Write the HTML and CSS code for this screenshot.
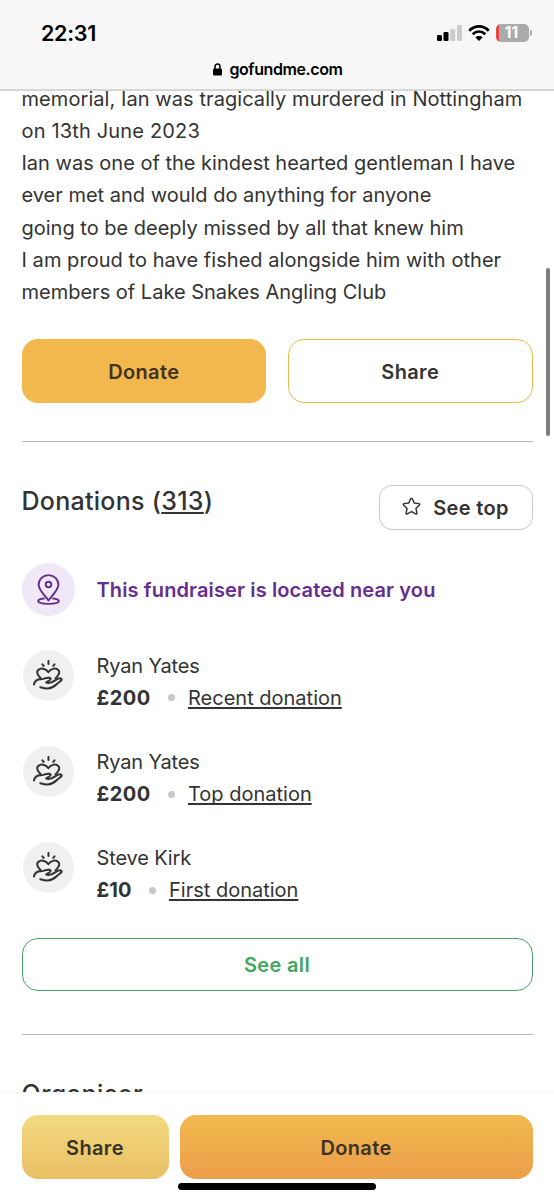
FILE: index.html
```
<!DOCTYPE html>
<html lang="en">
<head>
<meta charset="utf-8">
<title>gofundme.com</title>
<link rel="stylesheet" href="styles.css">
</head>
<body>
<svg class="defs" aria-hidden="true">
  <symbol id="hand-heart" viewBox="0 0 32 32">
    <path d="M16.500 1v3.200M10 4.500l1.300 1.800M23 4.500l-1.300 1.800"/>
    <path d="M8.300 19.500C3.600 15 3.600 11.500 6.500 10c3.200-1.900 7.400-.3 9.900 3 2.700-3.500 7-4.900 9.900-2.900 2.900 2.100 1.900 5.700-2.300 9.500"/>
    <path d="M1 26.200c.8-4 3.500-5.700 7-5.700 3.700 0 4-1.300 8.600-1.500 2.200-.1 2.700 1 1.500 2.200-1.100 1-2.400 1.500-4 2.800 3.400 1.300 6.700-.3 9.600-2.300 2.400-1.700 5.200-2.500 6.500-1.700 1 .8-.1 2-1.800 3.200-5.500 4.200-6.700 7-12.400 7.300-2.900.1-5.500-.6-8.200-1.500"/>
  </symbol>
</svg>
<header class="browser">
  <div class="status">
    <span class="clock">22:31</span>
    <span class="indicators">
      <svg class="signal" viewBox="0 0 25 16"><rect y="10" width="5" height="6" rx="1.200"/><rect x="6.500" y="7" width="5" height="9" rx="1.200"/><g fill="#ccc"><rect x="13.200" y="4" width="5" height="12" rx="1.200"/><rect x="20" y="0" width="5" height="16" rx="1.200"/></g></svg>
      <svg class="wifi" viewBox="0 0 22 16"><g fill="none" stroke="#000" stroke-width="2.800"><path d="M1.200 5.700C7-.1 15-.1 20.800 5.700"/><path d="M4.700 9.200c3.800-3.500 8.800-3.500 12.600 0"/></g><path d="M11 16l-3.700-3.700c2-1.900 5.400-1.900 7.400 0z"/></svg>
      <span class="battery"><span class="level">11</span><span class="cap"></span></span>
    </span>
  </div>
  <div class="address">
    <svg class="lock" viewBox="0 0 9 13"><path d="M2 6V3.600a2.500 2.500 0 0 1 5 0V6" fill="none" stroke="#000" stroke-width="1.500"/><rect y="5.500" width="9" height="7" rx="1.200"/></svg>
    <span>gofundme.com</span>
  </div>
</header>
<main class="page">
  <div class="story">
    <p class="l1">memorial, Ian was tragically murdered in Nottingham</p>
    <p class="l2">on 13th June 2023</p>
    <p>Ian was one of the kindest hearted gentleman I have</p>
    <p>ever met and would do anything for anyone</p>
    <p>going to be deeply missed by all that knew him</p>
    <p class="l6">I am proud to have fished alongside him with other</p>
    <p>members of Lake Snakes Angling Club</p>
  </div>
  <div class="actions">
    <button class="btn solid">Donate</button>
    <button class="btn outline">Share</button>
  </div>
  <section class="donations">
    <div class="heading">
      <h2>Donations (<a>313</a>)</h2>
      <button class="btn top"><svg viewBox="0 0 20 20"><path d="M9.200 1.800q.8-1.300 1.600 0l2.100 4.600 4.900.6q1.500.3.500 1.500l-3.600 3.500 1 4.900q.1 1.500-1.300.9L10 15.400l-4.400 2.400q-1.400.6-1.300-.9l1-4.900L1.700 8.500Q.7 7.300 2.200 7l4.900-.6z"/></svg><span>See top</span></button>
    </div>
    <div class="near">
      <span class="disc purple"><svg viewBox="0 0 24 32"><path d="M12 27.500C8 21.500 1.700 16.500 1.700 11a10.300 10 0 0 1 20.600 0c0 5.500-6.300 10.500-10.300 16.500z"/><circle cx="12" cy="10.800" r="2.900"/><path d="M7.200 25.400c-3.700.5-6 1.500-6 2.700 0 1.800 4.800 2.900 10.800 2.900s10.800-1.100 10.800-2.900c0-1.200-2.300-2.200-6-2.700"/></svg></span>
      <span class="near-text">This fundraiser is located near you</span>
    </div>
    <ul class="list">
      <li><span class="disc"><svg><use href="#hand-heart"/></svg></span><div><div class="name">Ryan Yates</div><div class="detail"><b>£200</b><i></i><a>Recent donation</a></div></div></li>
      <li><span class="disc"><svg><use href="#hand-heart"/></svg></span><div><div class="name">Ryan Yates</div><div class="detail"><b>£200</b><i></i><a>Top donation</a></div></div></li>
      <li><span class="disc"><svg><use href="#hand-heart"/></svg></span><div><div class="name">Steve Kirk</div><div class="detail"><b class="ten">£10</b><i></i><a>First donation</a></div></div></li>
    </ul>
    <button class="btn all">See all</button>
  </section>
  <h2 class="organiser">Organiser</h2>
  <span class="scrollbar"></span>
</main>
<footer class="dock">
  <div class="dock-row">
    <button class="btn share">Share</button>
    <button class="btn donate">Donate</button>
  </div>
  <div class="home"></div>
</footer>
</body>
</html>
```

FILE: styles.css
```
* { box-sizing: border-box; }
body {
  margin: 0;
  height: 1200px;
  overflow: hidden;
  display: flex;
  flex-direction: column;
  background: #fff;
  color: #333;
  font: 20px/32px Inter, "Liberation Sans", sans-serif;
}
p, h2, ul { margin: 0; padding: 0; }
.defs { position: absolute; width: 0; height: 0; }
.browser {
  flex: 0 0 91px;
  background: #f7f7f7;
  border-bottom: 2px solid #d6d6d6;
  color: #000;
}
.status {
  height: 55px;
  padding: 21px 22px 0 41px;
  display: flex;
  justify-content: space-between;
  align-items: flex-start;
}
.clock { font-size: 21.500px; line-height: 24px; font-weight: 600; letter-spacing: -.3px; }
.indicators { display: flex; align-items: center; height: 24px; }
.signal { width: 25px; height: 16px; margin-right: 6px; }
.wifi { width: 22px; height: 16px; margin-right: 6px; }
.battery { display: flex; align-items: center; gap: 1px; }
.level {
  width: 33px;
  height: 18px;
  border-radius: 5px;
  background: linear-gradient(90deg, #e8463c 3.500px, #ababab 3.500px);
  color: #fff;
  font-size: 15.500px;
  line-height: 18px;
  font-weight: 700;
  text-align: center;
  padding-right: 2px;
}
.cap { width: 2px; height: 6px; border-radius: 0 2px 2px 0; background: #ababab; }
.address {
  display: flex;
  justify-content: center;
  align-items: center;
  gap: 7px;
  height: 28px;
  padding-left: 2px;
  font-size: 16px;
  font-weight: 600;
  letter-spacing: -.4px;
}
.lock { width: 9px; height: 13px; }
.page { position: relative; flex: 1; min-height: 0; overflow: hidden; padding: 0 21.500px; }
.story { margin-top: -8px; margin-bottom: 31px; white-space: nowrap; }
.story p { height: 32.140px; line-height: 32.140px; }
.story .l1 { letter-spacing: .07px; }
.story .l2 { letter-spacing: .17px; }
.story .l6 { letter-spacing: .05px; }
.actions {
  display: grid;
  grid-template-columns: 1fr 1fr;
  gap: 22px;
  padding-bottom: 38px;
  border-bottom: 1px solid #b8b8b8;
}
.btn {
  display: flex;
  align-items: center;
  justify-content: center;
  height: 64px;
  padding: 2px 0 0;
  border: 0;
  border-radius: 16px;
  background: #fff;
  color: #333;
  font: 600 20px/32px Inter, "Liberation Sans", sans-serif;
  letter-spacing: .35px;
}
.solid { background: #f2b84e; color: #42331f; }
.outline { border: 1.500px solid #ecb94e; }
.donations { border-bottom: 1px solid #b8b8b8; padding: 43px 0; }
.heading { display: flex; justify-content: space-between; align-items: flex-start; }
h2 { font-size: 25px; line-height: 32px; font-weight: 500; letter-spacing: .28px; }
h2 a { text-decoration: underline; text-decoration-thickness: 2px; text-underline-offset: 2px; text-decoration-skip-ink: none; }
.top { width: 154px; height: 45px; border: 1.500px solid #c8c8c8; border-radius: 13px; gap: 12px; }
.top svg { width: 19px; height: 19px; fill: none; stroke: #333; stroke-width: 1.500; margin-top: -4px; }
.near { display: flex; align-items: center; gap: 22px; height: 54px; margin-top: 33px; color: #652d90; font-weight: 600; letter-spacing: .13px; }
.disc { display: flex; flex: none; align-items: center; justify-content: center; width: 51px; height: 51px; margin: 0 1px; border-radius: 50%; background: #f0f0f0; }
.disc svg { width: 30px; height: 30px; fill: none; stroke: #333; stroke-width: 2.150; stroke-linecap: round; stroke-linejoin: round; margin-top: -1px; }
.purple { width: 53px; height: 53px; margin: 0; background: #f0e8f6; }
.purple svg { width: 23px; height: 31px; stroke: #652d90; stroke-width: 2; margin: 0; }
.list { list-style: none; margin-top: 33px; }
.list li { display: flex; align-items: flex-start; gap: 22px; height: 96.300px; }
.list li:last-child { height: 95.500px; }
.name { height: 32px; letter-spacing: -.15px; }
.detail { display: flex; align-items: center; height: 32px; }
.detail b { font-weight: 700; width: 55px; letter-spacing: .5px; }
.detail b.ten { width: 36px; letter-spacing: 0; }
.detail i { width: 7px; height: 7px; margin: 0 13px 0 16.500px; border-radius: 50%; background: #c8c8c8; }
.detail a { text-decoration: underline; text-decoration-thickness: 1.500px; text-underline-offset: 2px; text-decoration-skip-ink: none; }
.all { width: 100%; height: 53.500px; padding-top: 1px; border: 1.500px solid #45a562; color: #45a562; }
.organiser { margin-top: 43px; letter-spacing: .5px; }
.scrollbar { position: absolute; right: 4px; top: 177px; width: 4px; height: 168px; border-radius: 2px; background: #7d7d7d; }
.dock { flex: 0 0 108px; border-top: 1px solid #f5f5f5; padding: 21.500px 21.500px 0; background: #fff; }
.dock-row { display: grid; grid-template-columns: 147px 1fr; gap: 11px; }
.share { background: linear-gradient(#f2da80, #e9bf65); color: #3b3228; }
.donate { background: linear-gradient(#f2b94e, #eb9e4a); color: #3b3228; }
.home { width: 198px; height: 7px; margin: 4px auto 0; border-radius: 4px; background: #000; }
```
